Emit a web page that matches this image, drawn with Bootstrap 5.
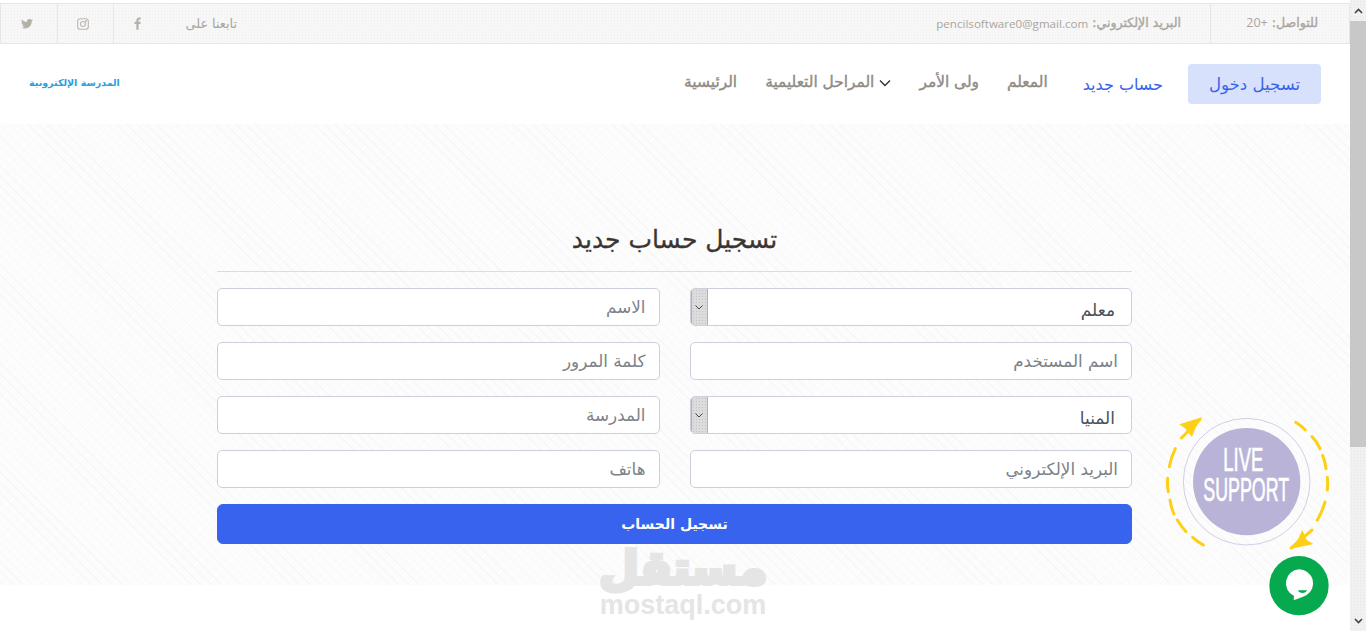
<!DOCTYPE html>
<html lang="ar" dir="rtl">
<head>
  <meta charset="UTF-8" />
  <title>تسجيل حساب جديد</title>
  <meta name="viewport" content="width=device-width, initial-scale=1">
  <link href="https://cdn.jsdelivr.net/npm/bootstrap@5.3.0/dist/css/bootstrap.min.css" rel="stylesheet">
  <style>
    html, body {
      height: 631px;
      overflow: hidden;
    }

    body {
      font-family: "DejaVu Sans", "Liberation Sans", sans-serif;
      background: #fff;
    }

    .page-shell {
      height: 631px;
      padding-top: 3px;
      flex: 1 1 auto;
      min-width: 0;
      position: relative;
    }

    /* top strip */
    .top-strip {
      height: 41px;
      background-color: #f7f7f7;
      background-image: radial-gradient(#efefef 0.6px, transparent 0.7px);
      background-size: 3px 3px;
      border: 1px solid #e6e6e6;
      font-size: 12.6px;
      color: #aaa59e;
    }

    .top-strip b {
      font-weight: 400;
      -webkit-text-stroke: .35px #aaa59e;
    }

    .strip-cell {
      height: 100%;
      display: flex;
      align-items: center;
    }

    .strip-phone {
      width: 139px;
      padding-right: 31px;
      border-left: 1px solid #e6e6e6;
    }

    .strip-phone span {
      font-family: "Open Sans", sans-serif;
      font-size: 12.5px;
    }

    .strip-mail {
      padding-right: 29px;
    }

    .strip-mail span {
      font-family: "Open Sans", sans-serif;
      font-size: 11.6px;
    }

    .strip-follow {
      padding-left: 15px;
      font-size: 12.8px;
    }

    .strip-icon {
      width: 56.5px;
      justify-content: center;
      padding-right: 4px;
      color: #b5b0a8;
    }

    .strip-icon + .strip-icon {
      border-right: 1px solid #e6e6e6;
    }

    .strip-follow + .strip-icon {
      padding-right: 9px;
    }

    /* main nav */
    .main-nav {
      height: 80px;
      padding: 0 29px;
    }

    .nav-login {
      width: 133px;
      height: 40px;
      background: #d7e1fb;
      color: #3763eb;
      border-radius: 4px;
      font-size: 16.6px;
      padding-top: 2px;
      text-decoration: none;
      margin-left: 25px;
    }

    .nav-signup {
      color: #3763eb;
      font-size: 16px;
      text-decoration: none;
      margin-left: 35px;
      margin-top: 2px;
    }

    .nav-plain {
      color: #8f8b84;
      font-size: 15.4px;
      -webkit-text-stroke: .4px #8f8b84;
      text-decoration: none;
      margin-left: 28px;
      margin-bottom: 3px;
    }

    .nav-plain svg {
      margin-left: 5px;
      vertical-align: 0;
    }

    .site-name {
      color: #2a9fe0;
      font-size: 9.5px;
      font-weight: 700;
      margin-right: auto;
      margin-bottom: 2px;
    }

    /* register area */
    .hero-area {
      height: 461px;
      background-color: #fcfcfc;
      background-image:
        repeating-linear-gradient(45deg, transparent 0 2px, #f7f7f7 2px 3px, transparent 3px 7px),
        repeating-linear-gradient(-45deg, transparent 0 5px, #fefefe 5px 6px, transparent 6px 11px);
      padding-top: 96px;
      padding-right: 1px;
    }

    .reg-wrap {
      width: 915px;
    }

    .reg-title {
      font-size: 25px;
      font-weight: 400;
      color: #3a3532;
      margin: 0;
      padding-bottom: 11px;
      border-bottom: 1px solid #dcdcdc;
      line-height: 40px;
      -webkit-text-stroke: .3px #3a3532;
    }

    .reg-row {
      --bs-gutter-x: 30px;
      --bs-gutter-y: 16px;
      margin-top: 0;
    }

    .reg-input {
      height: 38px;
      font-size: 16.8px;
      border-color: #cbd0dc;
      border-radius: 5px;
      padding: 0 13px;
      color: #495057;
    }

    .reg-input::placeholder {
      color: #7d8288;
    }

    .select-box {
      height: 38px;
      background: #fff;
      border: 1px solid #cbd0dc;
      border-radius: 5px;
      overflow: hidden;
    }

    .select-box select {
      border: 0;
      background: transparent;
      appearance: none;
      flex: 1 1 auto;
      height: 100%;
      font-size: 17px;
      color: #495057;
      padding: 7px 16px 0 0;
      outline: 0;
    }

    .select-arrow {
      width: 17px;
      flex: 0 0 17px;
      background-color: #dcdcdc;
      background-image: radial-gradient(#c4c4c4 0.6px, transparent 0.7px);
      background-size: 3px 3px;
      border-right: 1px solid #b5b0aa;
      border-left: 1px solid #b5b0aa;
    }

    .reg-submit {
      height: 40px;
      background: #3763ee;
      border-color: #3763ee;
      font-size: 14px;
      font-weight: 700;
      border-radius: 6px;
      letter-spacing: .3px;
      padding-top: 7px;
    }

    /* things lying over the page */
    .stock-mark {
      position: absolute;
      left: 598px;
      top: 546px;
      width: 170px;
      color: #e5e5e5;
      font-weight: 700;
      text-align: center;
      pointer-events: none;
    }

    .stock-mark-ar {
      font-size: 46px;
      line-height: 44px;
      -webkit-text-stroke: 4px #e5e5e5;
    }

    .stock-mark-en {
      font-family: "Liberation Sans", sans-serif;
      font-size: 27px;
      line-height: 30px;
      direction: ltr;
    }

    .live-badge {
      position: absolute;
      left: 1150px;
      top: 400px;
    }

    /* drawn scrollbar */
    .side-scroll {
      width: 16px;
      flex: 0 0 16px;
      height: 631px;
      background: #f1f1f1;
      background-image: radial-gradient(#e6e6e6 0.6px, transparent 0.7px);
      background-size: 3px 3px;
    }

    .side-scroll-btn {
      height: 21px;
    }

    .side-scroll-thumb {
      height: 426px;
      background: #c8c8c8;
    }
  </style>
</head>
<body class="d-flex" dir="ltr">

  <!-- scrollbar sits on the right whatever the page direction -->
  <div class="page-shell" dir="rtl">
    <div class="top-strip d-flex align-items-center">
      <div class="strip-cell strip-phone"><b>للتواصل:</b>&nbsp;<span>+20</span></div>
      <div class="strip-cell strip-mail"><b>البريد الإلكتروني:</b>&nbsp;<span>pencilsoftware0@gmail.com</span></div>
      <div class="d-flex h-100 me-auto">
        <div class="strip-cell strip-follow">تابعنا على</div>
        <div class="strip-cell strip-icon">
          <svg width="7" height="13" viewBox="0 0 8 14"><path fill="#b5b0a8" d="M5.2 14V7.6h2.100l.3-2.500H5.2V3.600c0-.7.2-1.200 1.200-1.200h1.300V.2C7.500.1 6.700 0 5.900 0 4 0 2.700 1.200 2.700 3.300v1.800H.6v2.500h2.100V14z"/></svg>
        </div>
        <div class="strip-cell strip-icon">
          <svg width="12" height="12" viewBox="0 0 12 12" fill="none" stroke="#bdb8b1" stroke-width="1.100"><rect x=".7" y=".7" width="10.600" height="10.600" rx="2.600"/><circle cx="6" cy="6" r="2.500"/><circle cx="9" cy="3" r=".4"/></svg>
        </div>
        <div class="strip-cell strip-icon">
          <svg width="12" height="10" viewBox="0 0 24 20"><path fill="#b5b0a8" d="M24 2.400c-.9.400-1.800.7-2.800.8 1-.6 1.800-1.600 2.200-2.700-1 .6-2 1-3.100 1.200C19.300.7 18 0 16.600 0c-2.700 0-4.900 2.200-4.900 4.900 0 .4 0 .8.100 1.100C7.700 5.800 4.100 3.900 1.700.9c-.4.700-.7 1.600-.7 2.500 0 1.700.9 3.200 2.200 4.100-.8 0-1.600-.2-2.200-.6v.1c0 2.400 1.700 4.400 3.900 4.800-.4.100-.8.200-1.300.2-.3 0-.6 0-.9-.1.600 2 2.400 3.400 4.600 3.400-1.700 1.300-3.800 2.100-6.100 2.100-.4 0-.8 0-1.200-.1C2.200 18.200 4.800 19 7.500 19c9.100 0 14-7.500 14-14v-.6c1-.7 1.800-1.600 2.500-2z"/></svg>
        </div>
      </div>
    </div>

    <nav class="main-nav d-flex align-items-center">
      <a href="#" class="nav-login d-flex align-items-center justify-content-center">تسجيل دخول</a>
      <a href="#" class="nav-signup">حساب جديد</a>
      <a href="#" class="nav-plain">المعلم</a>
      <a href="#" class="nav-plain">ولى الأمر</a>
      <a href="#" class="nav-plain">
        <svg width="12" height="8" viewBox="0 0 12 8" fill="none" stroke="#333" stroke-width="1.400"><path d="M1 1.500l5 5 5-5"/></svg>المراحل التعليمية
      </a>
      <a href="#" class="nav-plain">الرئيسية</a>
      <span class="site-name">المدرسة الإلكترونية</span>
    </nav>

    <section class="hero-area">
      <div class="reg-wrap mx-auto">
        <h1 class="reg-title text-center">تسجيل حساب جديد</h1>
        <form class="row reg-row">
          <div class="col-6">
            <div class="select-box d-flex">
              <select aria-label="نوع الحساب"><option>معلم</option></select>
              <span class="select-arrow d-flex align-items-center justify-content-center">
                <svg width="8" height="5" viewBox="0 0 8 5" fill="none" stroke="#444" stroke-width="1"><path d="M.5.500L4 4 7.500.500"/></svg>
              </span>
            </div>
          </div>
          <div class="col-6"><input class="form-control reg-input" type="text" placeholder="الاسم"></div>
          <div class="col-6"><input class="form-control reg-input" type="text" placeholder="اسم المستخدم"></div>
          <div class="col-6"><input class="form-control reg-input" type="password" placeholder="كلمة المرور"></div>
          <div class="col-6">
            <div class="select-box d-flex">
              <select aria-label="المحافظة"><option>المنيا</option></select>
              <span class="select-arrow d-flex align-items-center justify-content-center">
                <svg width="8" height="5" viewBox="0 0 8 5" fill="none" stroke="#444" stroke-width="1"><path d="M.5.500L4 4 7.500.500"/></svg>
              </span>
            </div>
          </div>
          <div class="col-6"><input class="form-control reg-input" type="text" placeholder="المدرسة"></div>
          <div class="col-6"><input class="form-control reg-input" type="email" placeholder="البريد الإلكتروني"></div>
          <div class="col-6"><input class="form-control reg-input" type="text" placeholder="هاتف"></div>
          <div class="col-12"><button type="button" class="btn btn-primary w-100 reg-submit">تسجيل الحساب</button></div>
        </form>
      </div>
    </section>

    <div class="stock-mark">
      <div class="stock-mark-ar">مستقل</div>
      <div class="stock-mark-en">mostaql.com</div>
    </div>

    <svg class="live-badge" width="200" height="231" viewBox="0 0 600 693">
      <circle cx="290" cy="245" r="190" fill="none" stroke="#bdb6da" stroke-width="2"/>
      <circle cx="290" cy="245" r="161" fill="#b9b3d8"/>
      <g font-family="Liberation Sans, sans-serif" fill="#fff" stroke="#fff" stroke-width="2" font-size="98">
        <text transform="translate(220 214) scale(.565 1)" direction="ltr">LIVE</text>
        <text transform="translate(160 304) scale(.545 1)" direction="ltr">SUPPORT</text>
      </g>
      <g fill="none" stroke="#fdd016" stroke-width="9" stroke-linecap="round">
        <path d="M437 67Q452 76 466 90M486 110Q502 126 510 146M518 166Q526 186 528 206M532 232Q534 250 532 270M525 306Q516 336 502 360"/>
        <path d="M160 435Q143 426 128 412M108 395Q94 380 82 360M72 342Q63 322 60 300M55 275Q51 255 53 235M58 200Q63 172 76 146"/>
        <path d="M150 58L94 114"/>
        <path d="M424 444L486 390"/>
      </g>
      <path fill="#fdd016" d="M156 52L88 73 104 84 126 111 136 85z"/>
      <path fill="#fdd016" d="M417 448L490 432 470 420 457 390 444 418z"/>
      <circle cx="447" cy="557" r="89" fill="#07a94f"/>
      <path fill="#fff" d="M447 508a42 42 0 0 1 22 78c-10 6-24 9-38 15l1-13a42 42 0 0 1 15-80z"/>
      <path fill="#07a94f" d="M444 571h27c-2 6-7 8-13 8s-12-2-14-8z"/>
    </svg>
  </div>

  <div class="side-scroll d-flex flex-column">
    <div class="side-scroll-btn d-flex align-items-center justify-content-center">
      <svg width="9" height="6" viewBox="0 0 9 6" fill="none" stroke="#444" stroke-width="1.600"><path d="M1 5l3.500-3.500L8 5"/></svg>
    </div>
    <div class="side-scroll-thumb"></div>
    <div class="side-scroll-btn d-flex align-items-center justify-content-center mt-auto">
      <svg width="9" height="6" viewBox="0 0 9 6" fill="none" stroke="#444" stroke-width="1.600"><path d="M1 1l3.500 3.500L8 1"/></svg>
    </div>
  </div>

  <script src="https://cdn.jsdelivr.net/npm/bootstrap@5.3.0/dist/js/bootstrap.bundle.min.js"></script>
</body>
</html>
